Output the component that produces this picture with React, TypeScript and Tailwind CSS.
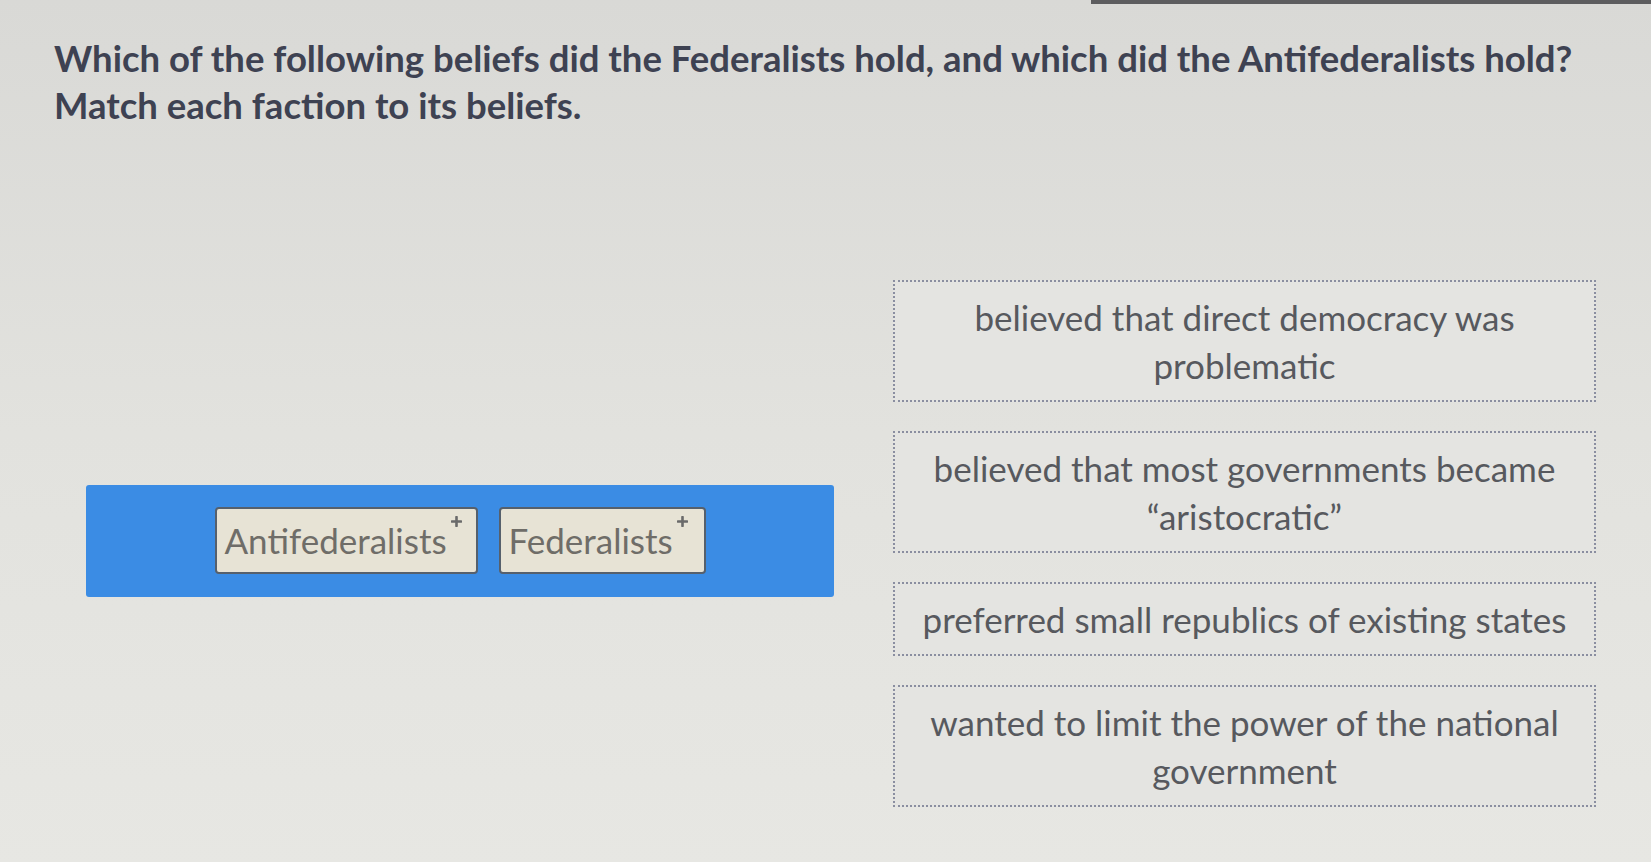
import React from "react";

const beliefs: string[][] = [
  ["believed that direct democracy was", "problematic"],
  ["believed that most governments became", "“aristocratic”"],
  ["preferred small republics of existing states"],
  ["wanted to limit the power of the national", "government"],
];

function PlusMark() {
  return (
    <svg width="11" height="11" viewBox="0 0 11 11" className="self-start mt-[7px] ml-[4px] shrink-0">
      <path d="M5.5 1v9M1 5.5h9" stroke="#6a6a6a" strokeWidth="2.6" strokeLinecap="round" />
    </svg>
  );
}

function Chip({ label, width }: { label: string; width: string }) {
  return (
    <div
      className={`${width} h-[67px] flex items-center rounded-[4px] border-2 border-[#56606c] bg-[#e7e3d5] pl-[8px] pr-[4px]`}
    >
      <span className="text-[35px] leading-none text-[#6f6d68]">{label}</span>
      <PlusMark />
    </div>
  );
}

export default function App() {
  return (
    <div
      className="w-[1651px] h-[862px] overflow-hidden bg-gradient-to-b from-[#d9d9d6] via-[#e2e2de] to-[#e7e7e3] flex flex-col"
      style={{ fontFamily: "Lato, 'Open Sans', sans-serif" }}
    >
      <div className="flex justify-end">
        <div className="w-[560px] h-[4px] bg-[#5d5d5f]" />
      </div>

      <div className="pl-[54px] pt-[31px] text-[36.5px] font-bold leading-[47px] text-[#3e4252]">
        <p>Which of the following beliefs did the Federalists hold, and which did the Antifederalists hold?</p>
        <p>Match each faction to its beliefs.</p>
      </div>

      <div className="flex pl-[86px] mt-[151px]">
        <div className="w-[748px] flex items-center">
          <div className="w-full h-[112px] mb-[6px] rounded-[3px] bg-[#3b8ce4] flex items-center justify-center gap-[21px]">
            <Chip label="Antifederalists" width="w-[263px]" />
            <Chip label="Federalists" width="w-[207px]" />
          </div>
        </div>

        <div className="ml-[59px] w-[703px] flex flex-col gap-[29px]">
          {beliefs.map((lines, i) => (
            <div
              key={i}
              className="border-2 border-dotted border-[#8a8ea0] bg-[#e4e4e1] py-[11px] text-center text-[35px] leading-[48px] text-[#57595e]"
            >
              {lines.map((l, j) => (
                <div key={j}>{l}</div>
              ))}
            </div>
          ))}
        </div>
      </div>
    </div>
  );
}
